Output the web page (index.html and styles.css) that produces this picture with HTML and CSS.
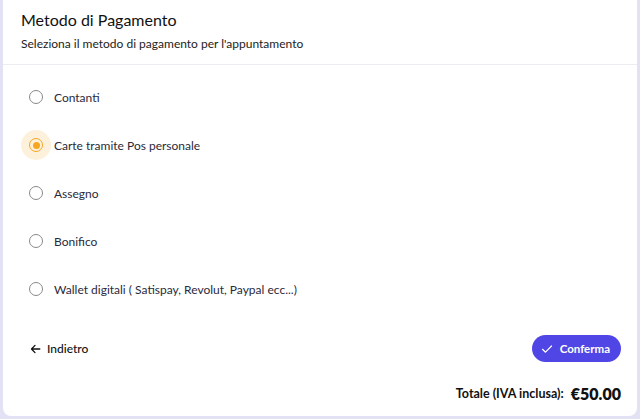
FILE: index.html
```html
<!DOCTYPE html>
<html lang="it">
<head>
    <meta charset="UTF-8">
    <meta name="viewport" content="width=device-width, initial-scale=1.0">
    <title>Metodo di Pagamento</title>
    <link rel="stylesheet" href="styles.css">
</head>
<body>
    <div class="card">
        <div class="card-header">
            <h2 class="title">Metodo di Pagamento</h2>
            <p class="subtitle">Seleziona il metodo di pagamento per l'appuntamento</p>
        </div>

        <ul class="options">
            <li class="option"><span class="radio"><span class="dot"></span></span>Contanti</li>
            <li class="option selected"><span class="radio"><span class="dot"></span></span>Carte tramite Pos personale</li>
            <li class="option"><span class="radio"><span class="dot"></span></span>Assegno</li>
            <li class="option"><span class="radio"><span class="dot"></span></span>Bonifico</li>
            <li class="option"><span class="radio"><span class="dot"></span></span>Wallet digitali ( Satispay, Revolut, Paypal ecc...)</li>
        </ul>

        <div class="actions">
            <button class="back">
                <svg width="11" height="12" viewBox="0 0 11 12"><path d="M9.8 6H1.6M5 2.4L1.5 6 5 9.6" fill="none" stroke="#111" stroke-width="1.3" stroke-linecap="round" stroke-linejoin="round"/></svg>
                Indietro
            </button>
            <button class="confirm">
                <svg width="12" height="12" viewBox="0 0 12 12"><path d="M1.5 6.3l3 2.9 6-6.2" fill="none" stroke="#fff" stroke-width="1.2" stroke-linecap="round" stroke-linejoin="round"/></svg>
                Conferma
            </button>
        </div>

        <div class="total">
            <span class="total-label">Totale (IVA inclusa):</span>
            <span class="total-value">€50.00</span>
        </div>
    </div>
</body>
</html>
```

FILE: styles.css
```css
body { margin: 0; background: #e3e1f4; font-family: Lato, "Noto Sans", sans-serif; color: #1c1c28; padding: 0 3px 3px 3px; }
.card { background: #fff; height: 416px; border-radius: 0 0 8px 8px; box-sizing: border-box; }
.card-header { padding: 10px 18px 12px; border-bottom: 1px solid #ececf1; }
.title { margin: 0; font-size: 16px; line-height: 20px; font-weight: 400; color: #111; }
.subtitle { margin: 6px 0 0; font-size: 12px; line-height: 16px; color: #222; }
.options { list-style: none; margin: 0; padding: 8px 0 0 18px; }
.option { display: flex; align-items: center; height: 48px; font-size: 12px; color: #2a2a3a; }
.radio { width: 30px; height: 30px; border-radius: 50%; display: flex; align-items: center; justify-content: center; margin-right: 3px; }
.dot { width: 14px; height: 14px; border: 1.3px solid #8a8a8a; border-radius: 50%; box-sizing: border-box; display: flex; align-items: center; justify-content: center; }
.selected .radio { background: #fef1dc; }
.selected .dot { border-color: #f5a623; }
.selected .dot::after { content: ""; width: 7px; height: 7px; border-radius: 50%; background: #f5a623; }
.actions { display: flex; justify-content: space-between; align-items: center; padding: 22px 16px 0 27px; }
.back { display: flex; align-items: center; gap: 6px; background: none; border: none; padding: 0; font-family: inherit; font-size: 12px; font-weight: 500; color: #111; }
.confirm { display: flex; align-items: center; gap: 7px; height: 27px; padding: 0 11px 0 9px; background: #5046e5; color: #fff; border: none; border-radius: 14px; font-family: inherit; font-size: 11.5px; font-weight: 700; }
.total { display: flex; justify-content: flex-end; align-items: center; gap: 7px; padding: 22px 16px 0; }
.total-label { font-size: 12.5px; font-weight: 700; color: #111; }
.total-value { font-size: 16px; font-weight: 800; color: #111; }
```
